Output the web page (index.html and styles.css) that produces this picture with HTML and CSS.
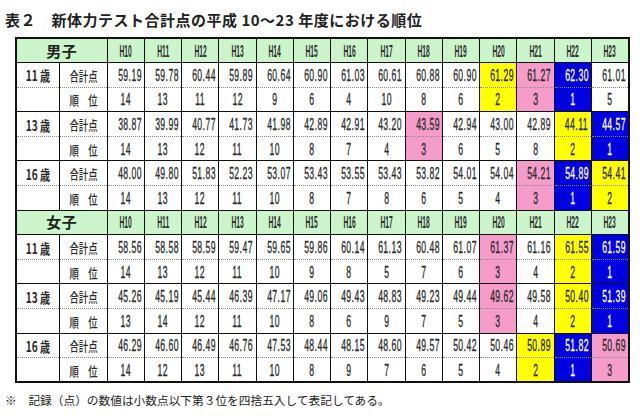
FILE: index.html
```html
<!DOCTYPE html>
<html lang="ja">
<head>
<meta charset="utf-8">
<title>表２</title>
<link rel="stylesheet" href="styles.css">
</head>
<body>
<h1 class="title">表２　新体力テスト合計点の平成 10～23 年度における順位</h1>
<table class="tbl">
<colgroup><col class="c-age"><col class="c-lbl"><col span="14" class="c-d"></colgroup>
<tbody>
<tr class="head"><th colspan="2" class="sex">男子</th><th><span class="h">H10</span></th><th><span class="h">H11</span></th><th><span class="h">H12</span></th><th><span class="h">H13</span></th><th><span class="h">H14</span></th><th><span class="h">H15</span></th><th><span class="h">H16</span></th><th><span class="h">H17</span></th><th><span class="h">H18</span></th><th><span class="h">H19</span></th><th><span class="h">H20</span></th><th><span class="h">H21</span></th><th><span class="h">H22</span></th><th><span class="h">H23</span></th></tr>
<tr class="score"><td class="age"><span class="a">11 歳</span></td><td class="lbl"><span class="l">合計点</span></td><td><span class="n">59.19</span></td><td><span class="n">59.78</span></td><td><span class="n">60.44</span></td><td><span class="n">59.89</span></td><td><span class="n">60.64</span></td><td><span class="n">60.90</span></td><td><span class="n">61.03</span></td><td><span class="n">60.61</span></td><td><span class="n">60.88</span></td><td><span class="n">60.90</span></td><td class="y"><span class="n">61.29</span></td><td class="p"><span class="n">61.27</span></td><td class="b"><span class="n">62.30</span></td><td><span class="n">61.01</span></td></tr>
<tr class="rank"><td class="age"></td><td class="lbl"><span class="l">順　位</span></td><td><span class="n">14</span></td><td><span class="n">13</span></td><td><span class="n">11</span></td><td><span class="n">12</span></td><td><span class="n">9</span></td><td><span class="n">6</span></td><td><span class="n">4</span></td><td><span class="n">10</span></td><td><span class="n">8</span></td><td><span class="n">6</span></td><td class="y"><span class="n">2</span></td><td class="p"><span class="n">3</span></td><td class="b"><span class="n">1</span></td><td><span class="n">5</span></td></tr>
<tr class="score"><td class="age"><span class="a">13 歳</span></td><td class="lbl"><span class="l">合計点</span></td><td><span class="n">38.87</span></td><td><span class="n">39.99</span></td><td><span class="n">40.77</span></td><td><span class="n">41.73</span></td><td><span class="n">41.98</span></td><td><span class="n">42.89</span></td><td><span class="n">42.91</span></td><td><span class="n">43.20</span></td><td class="p"><span class="n">43.59</span></td><td><span class="n">42.94</span></td><td><span class="n">43.00</span></td><td><span class="n">42.89</span></td><td class="y"><span class="n">44.11</span></td><td class="b"><span class="n">44.57</span></td></tr>
<tr class="rank"><td class="age"></td><td class="lbl"><span class="l">順　位</span></td><td><span class="n">14</span></td><td><span class="n">13</span></td><td><span class="n">12</span></td><td><span class="n">11</span></td><td><span class="n">10</span></td><td><span class="n">8</span></td><td><span class="n">7</span></td><td><span class="n">4</span></td><td class="p"><span class="n">3</span></td><td><span class="n">6</span></td><td><span class="n">5</span></td><td><span class="n">8</span></td><td class="y"><span class="n">2</span></td><td class="b"><span class="n">1</span></td></tr>
<tr class="score"><td class="age"><span class="a">16 歳</span></td><td class="lbl"><span class="l">合計点</span></td><td><span class="n">48.00</span></td><td><span class="n">49.80</span></td><td><span class="n">51.83</span></td><td><span class="n">52.23</span></td><td><span class="n">53.07</span></td><td><span class="n">53.43</span></td><td><span class="n">53.55</span></td><td><span class="n">53.43</span></td><td><span class="n">53.82</span></td><td><span class="n">54.01</span></td><td><span class="n">54.04</span></td><td class="p"><span class="n">54.21</span></td><td class="b"><span class="n">54.89</span></td><td class="y"><span class="n">54.41</span></td></tr>
<tr class="rank"><td class="age"></td><td class="lbl"><span class="l">順　位</span></td><td><span class="n">14</span></td><td><span class="n">13</span></td><td><span class="n">12</span></td><td><span class="n">11</span></td><td><span class="n">10</span></td><td><span class="n">8</span></td><td><span class="n">7</span></td><td><span class="n">8</span></td><td><span class="n">6</span></td><td><span class="n">5</span></td><td><span class="n">4</span></td><td class="p"><span class="n">3</span></td><td class="b"><span class="n">1</span></td><td class="y"><span class="n">2</span></td></tr>
<tr class="head"><th colspan="2" class="sex">女子</th><th><span class="h">H10</span></th><th><span class="h">H11</span></th><th><span class="h">H12</span></th><th><span class="h">H13</span></th><th><span class="h">H14</span></th><th><span class="h">H15</span></th><th><span class="h">H16</span></th><th><span class="h">H17</span></th><th><span class="h">H18</span></th><th><span class="h">H19</span></th><th><span class="h">H20</span></th><th><span class="h">H21</span></th><th><span class="h">H22</span></th><th><span class="h">H23</span></th></tr>
<tr class="score"><td class="age"><span class="a">11 歳</span></td><td class="lbl"><span class="l">合計点</span></td><td><span class="n">58.56</span></td><td><span class="n">58.58</span></td><td><span class="n">58.59</span></td><td><span class="n">59.47</span></td><td><span class="n">59.65</span></td><td><span class="n">59.86</span></td><td><span class="n">60.14</span></td><td><span class="n">61.13</span></td><td><span class="n">60.48</span></td><td><span class="n">61.07</span></td><td class="p"><span class="n">61.37</span></td><td><span class="n">61.16</span></td><td class="y"><span class="n">61.55</span></td><td class="b"><span class="n">61.59</span></td></tr>
<tr class="rank"><td class="age"></td><td class="lbl"><span class="l">順　位</span></td><td><span class="n">14</span></td><td><span class="n">13</span></td><td><span class="n">12</span></td><td><span class="n">11</span></td><td><span class="n">10</span></td><td><span class="n">9</span></td><td><span class="n">8</span></td><td><span class="n">5</span></td><td><span class="n">7</span></td><td><span class="n">6</span></td><td class="p"><span class="n">3</span></td><td><span class="n">4</span></td><td class="y"><span class="n">2</span></td><td class="b"><span class="n">1</span></td></tr>
<tr class="score"><td class="age"><span class="a">13 歳</span></td><td class="lbl"><span class="l">合計点</span></td><td><span class="n">45.26</span></td><td><span class="n">45.19</span></td><td><span class="n">45.44</span></td><td><span class="n">46.39</span></td><td><span class="n">47.17</span></td><td><span class="n">49.06</span></td><td><span class="n">49.43</span></td><td><span class="n">48.83</span></td><td><span class="n">49.23</span></td><td><span class="n">49.44</span></td><td class="p"><span class="n">49.62</span></td><td><span class="n">49.58</span></td><td class="y"><span class="n">50.40</span></td><td class="b"><span class="n">51.39</span></td></tr>
<tr class="rank"><td class="age"></td><td class="lbl"><span class="l">順　位</span></td><td><span class="n">13</span></td><td><span class="n">14</span></td><td><span class="n">12</span></td><td><span class="n">11</span></td><td><span class="n">10</span></td><td><span class="n">8</span></td><td><span class="n">6</span></td><td><span class="n">9</span></td><td><span class="n">7</span></td><td><span class="n">5</span></td><td class="p"><span class="n">3</span></td><td><span class="n">4</span></td><td class="y"><span class="n">2</span></td><td class="b"><span class="n">1</span></td></tr>
<tr class="score"><td class="age"><span class="a">16 歳</span></td><td class="lbl"><span class="l">合計点</span></td><td><span class="n">46.29</span></td><td><span class="n">46.60</span></td><td><span class="n">46.49</span></td><td><span class="n">46.76</span></td><td><span class="n">47.53</span></td><td><span class="n">48.44</span></td><td><span class="n">48.15</span></td><td><span class="n">48.60</span></td><td><span class="n">49.57</span></td><td><span class="n">50.42</span></td><td><span class="n">50.46</span></td><td class="y"><span class="n">50.89</span></td><td class="b"><span class="n">51.82</span></td><td class="p"><span class="n">50.69</span></td></tr>
<tr class="rank"><td class="age"></td><td class="lbl"><span class="l">順　位</span></td><td><span class="n">14</span></td><td><span class="n">12</span></td><td><span class="n">13</span></td><td><span class="n">11</span></td><td><span class="n">10</span></td><td><span class="n">8</span></td><td><span class="n">9</span></td><td><span class="n">7</span></td><td><span class="n">6</span></td><td><span class="n">5</span></td><td><span class="n">4</span></td><td class="y"><span class="n">2</span></td><td class="b"><span class="n">1</span></td><td class="p"><span class="n">3</span></td></tr>
</tbody>
</table>
<p class="note">※　記録（点）の数値は小数点以下第３位を四捨五入して表記してある。</p>
</body>
</html>
```
FILE: styles.css
```css
html, body {
  margin: 0;
  padding: 0;
  background: #ffffff;
}
body {
  width: 640px;
  height: 418px;
  overflow: hidden;
  font-family: "Noto Sans CJK JP", "Noto Sans", sans-serif;
  color: #2a2a2a;
}
.title {
  margin: 0 0 0 5px;
  height: 37px;
  box-sizing: border-box;
  padding-top: 4px;
  line-height: 32px;
  font-size: 15px;
  font-weight: 700;
  letter-spacing: 0.5px;
  color: #222;
  white-space: nowrap;
}
.tbl {
  margin-left: 15px;
  width: 613px;
  table-layout: fixed;
  border-collapse: collapse;
  border: 2px solid #111;
}
.c-age { width: 43px; }
.c-lbl { width: 48px; }
.c-d { width: 37.28px; }
.tbl tr { height: 24.6px; }
.tbl th, .tbl td {
  padding: 0;
  text-align: center;
  vertical-align: middle;
  border-left: 1px solid #111;
  border-right: 1px solid #111;
  white-space: nowrap;
  overflow: visible;
  line-height: 20px;
}
.head th {
  background: #ccf5cc;
  border-top: 1px solid #111;
  border-bottom: 1px solid #111;
  font-weight: 700;
}
.score td { border-top: 1px solid #111; }
.rank td { border-top: 1px dotted #8a8a8a; }
.sex {
  font-size: 15px;
  letter-spacing: 0.5px;
  color: #222;
}
.h {
  display: inline-block;
  font-family: "Liberation Sans", Arial, sans-serif;
  font-size: 16px;
  font-weight: 700;
  transform: scaleX(0.42);
  color: #2f2f2f;
}
.n {
  display: inline-block;
  font-family: "Liberation Sans", Arial, sans-serif;
  font-size: 16px;
  letter-spacing: 0.8px;
  transform: scaleX(0.54);
  color: #2a2a2a;
  -webkit-text-stroke: 0.3px #2a2a2a;
}
.b .n { color: #ffffff; -webkit-text-stroke: 0.3px #ffffff; }
.l {
  display: inline-block;
  font-size: 13px;
  font-weight: 500;
  transform: scaleX(0.72);
  color: #2a2a2a;
}
.a {
  display: inline-block;
  font-size: 14px;
  font-weight: 700;
  transform: scaleX(0.72);
  color: #2a2a2a;
}
.y { background: #ffff00; }
.p { background: #f59cca; }
.b { background: #0000e0; }
.note {
  margin: 8px 0 0 5px;
  font-size: 11.7px;
  line-height: 18px;
  color: #222;
  white-space: nowrap;
}
```
